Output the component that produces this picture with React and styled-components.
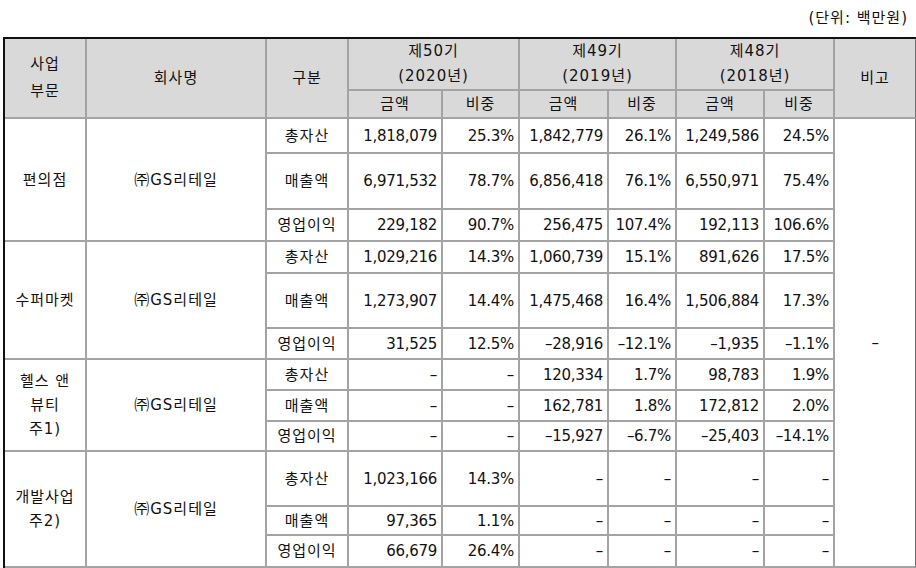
import React from 'react';
import styled, { createGlobalStyle } from 'styled-components';

const GlobalStyle = createGlobalStyle`
  body {
    margin: 0;
    background: #fff;
    color: #111;
    font-family: 'DejaVu Sans', 'Noto Sans CJK KR', sans-serif;
    font-size: 15px;
  }
`;

const Page = styled.div`
  width: 916px;
  padding-left: 3px;
  box-sizing: border-box;
`;

const Unit = styled.div`
  height: 37px;
  line-height: 36px;
  text-align: right;
  padding-right: 8px;
  letter-spacing: 1px;
`;

const Table = styled.table`
  table-layout: fixed;
  width: 912px;
  border-collapse: separate;
  border-spacing: 0;
  border-top: 2px solid #111;
  border-left: 2px solid #111;
`;

const Row = styled.tr`
  height: ${({ $h }) => $h}px;
`;

const Cell = styled.td`
  box-sizing: border-box;
  padding: 0 ${({ $align }) => ($align === 'right' ? '4px' : '2px')};
  border-right: 2px solid ${({ $last }) => ($last ? '#6e6e6e' : '#a3a3a3')};
  border-bottom: 2px solid #a3a3a3;
  text-align: ${({ $align }) => $align || 'center'};
  vertical-align: middle;
  line-height: ${({ $lh }) => $lh || 24}px;
  letter-spacing: ${({ $label }) => ($label ? '1px' : '-0.3px')};
  white-space: nowrap;
  background: #fff;
`;

const Head = styled(Cell).attrs({ as: 'th' })`
  background: #d9d9d9;
  font-weight: normal;
  letter-spacing: 1px;
`;

const widths = [82, 180, 82, 94, 77, 89, 68, 88, 70, 82];

const periods = [
  { no: '제50기', year: '(2020년)' },
  { no: '제49기', year: '(2019년)' },
  { no: '제48기', year: '(2018년)' },
];

const D = '–';

const groups = [
  {
    name: ['편의점'],
    rows: [
      { h: 35, label: '총자산', v: ['1,818,079', '25.3%', '1,842,779', '26.1%', '1,249,586', '24.5%'] },
      { h: 56, label: '매출액', v: ['6,971,532', '78.7%', '6,856,418', '76.1%', '6,550,971', '75.4%'] },
      { h: 32, label: '영업이익', v: ['229,182', '90.7%', '256,475', '107.4%', '192,113', '106.6%'] },
    ],
  },
  {
    name: ['수퍼마켓'],
    rows: [
      { h: 32, label: '총자산', v: ['1,029,216', '14.3%', '1,060,739', '15.1%', '891,626', '17.5%'] },
      { h: 55, label: '매출액', v: ['1,273,907', '14.4%', '1,475,468', '16.4%', '1,506,884', '17.3%'] },
      { h: 31, label: '영업이익', v: ['31,525', '12.5%', `${D}28,916`, `${D}12.1%`, `${D}1,935`, `${D}1.1%`] },
    ],
  },
  {
    name: ['헬스 앤', '뷰티', '주1)'],
    rows: [
      { h: 31, label: '총자산', v: [D, D, '120,334', '1.7%', '98,783', '1.9%'] },
      { h: 31, label: '매출액', v: [D, D, '162,781', '1.8%', '172,812', '2.0%'] },
      { h: 30, label: '영업이익', v: [D, D, `${D}15,927`, `${D}6.7%`, `${D}25,403`, `${D}14.1%`] },
    ],
  },
  {
    name: ['개발사업', '주2)'],
    rows: [
      { h: 55, label: '총자산', v: ['1,023,166', '14.3%', D, D, D, D] },
      { h: 29, label: '매출액', v: ['97,365', '1.1%', D, D, D, D] },
      { h: 32, label: '영업이익', v: ['66,679', '26.4%', D, D, D, D] },
    ],
  },
];

const totalRows = groups.reduce((n, g) => n + g.rows.length, 0);

const Lines = ({ items }) =>
  items.map((t, i) => (
    <React.Fragment key={t}>
      {i > 0 && <br />}
      {t}
    </React.Fragment>
  ));

const App = () => (
  <Page>
    <GlobalStyle />
    <Unit>(단위: 백만원)</Unit>
    <Table>
      <colgroup>
        {widths.map((w, i) => (
          <col key={i} style={{ width: w }} />
        ))}
      </colgroup>
      <thead>
        <Row $h={52}>
          <Head rowSpan={2} $lh={27}>
            사업
            <br />
            부문
          </Head>
          <Head rowSpan={2}>회사명</Head>
          <Head rowSpan={2}>구분</Head>
          {periods.map((p) => (
            <Head key={p.no} colSpan={2} $lh={25}>
              {p.no}
              <br />
              {p.year}
            </Head>
          ))}
          <Head rowSpan={2} $last>
            비고
          </Head>
        </Row>
        <Row $h={28}>
          {periods.map((p) => (
            <React.Fragment key={p.no}>
              <Head>금액</Head>
              <Head>비중</Head>
            </React.Fragment>
          ))}
        </Row>
      </thead>
      <tbody>
        {groups.map((g, gi) =>
          g.rows.map((r, ri) => (
            <Row key={`${gi}-${ri}`} $h={r.h}>
              {ri === 0 && (
                <>
                  <Cell rowSpan={g.rows.length} $label>
                    <Lines items={g.name} />
                  </Cell>
                  <Cell rowSpan={g.rows.length} $label>
                    ㈜GS리테일
                  </Cell>
                </>
              )}
              <Cell $label>{r.label}</Cell>
              {r.v.map((v, vi) => (
                <Cell key={vi} $align="right">
                  {v}
                </Cell>
              ))}
              {gi === 0 && ri === 0 && (
                <Cell rowSpan={totalRows} $last>
                  {D}
                </Cell>
              )}
            </Row>
          ))
        )}
      </tbody>
    </Table>
  </Page>
);

export default App;
